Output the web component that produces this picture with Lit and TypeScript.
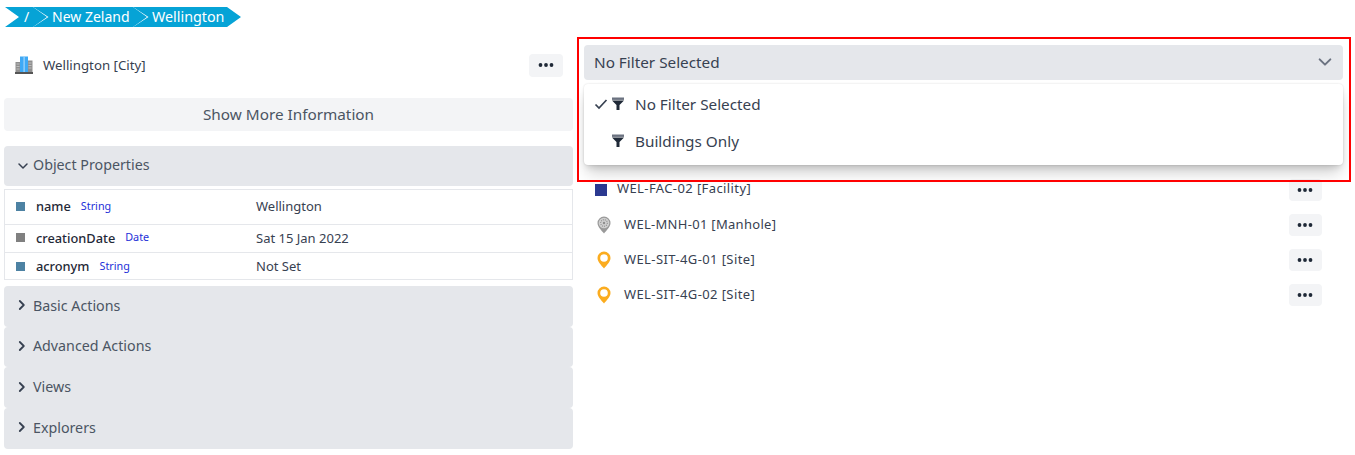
import { LitElement, html, css, svg } from "lit";
import { customElement } from "lit/decorators.js";

const chevDown = html`<svg class="chev" viewBox="0 0 12 12"><path d="M2 4l4 4 4-4" fill="none" stroke="currentColor" stroke-width="1.5" stroke-linecap="round" stroke-linejoin="round"/></svg>`;
const chevRight = html`<svg class="chev" viewBox="0 0 12 12"><path d="M2.800 2l4 4-4 4" fill="none" stroke="currentColor" stroke-width="1.800" stroke-linecap="round" stroke-linejoin="round"/></svg>`;
const funnel = html`<svg class="funnel" viewBox="0 0 12 13"><rect x="0" y="0.5" width="12" height="2.400" fill="#6b7280"/><path d="M0 3.600h12L7.500 8V13H4.500V8z" fill="#1f2937"/></svg>`;
const check = html`<svg class="check" viewBox="0 0 14 12"><path d="M1.500 6.500l3.500 3.500 7.500-8" fill="none" stroke="#374151" stroke-width="1.700"/></svg>`;
const dots = html`<button class="dots"><svg viewBox="0 0 16 4" width="16" height="4"><circle cx="2.500" cy="2" r="1.900" fill="#1f2937"/><circle cx="8" cy="2" r="1.900" fill="#1f2937"/><circle cx="13.500" cy="2" r="1.900" fill="#1f2937"/></svg></button>`;
const city = html`<svg class="city" viewBox="0 0 18 18">
  <rect x="0.500" y="6" width="6" height="11" fill="#8f8f8f"/><rect x="11.500" y="4.500" width="6" height="12.500" fill="#8f8f8f"/>
  <rect x="5" y="0.500" width="8" height="16.500" fill="#3fa9f5"/><rect x="8.500" y="0.500" width="1.200" height="16.500" fill="#a6d8fb"/>
  <path d="M1.500 8h3M1.500 10.500h3M1.500 13h3M13.500 7h3M13.500 9.500h3M13.500 12h3" stroke="#c9c9c9" stroke-width="0.800"/>
  <rect x="0" y="16" width="18" height="2" fill="#555"/></svg>`;
const pin = (c: string, hole: string) => svg`<svg class="pin" viewBox="0 0 14 18">
  <path d="M7 .5a6.500 6.500 0 0 1 6.500 6.500c0 3.800-4 7.500-6.500 10.500C4.500 14.500.5 10.800.5 7A6.500 6.500 0 0 1 7 .5z" fill="${c}"/>
  <circle cx="7" cy="7" r="3.800" fill="${hole}"/></svg>`;
const manhole = svg`<svg class="pin" viewBox="0 0 14 18">
  <path d="M7 .5a6.500 6.500 0 0 1 6.500 6.500c0 3.800-4 7.500-6.500 10.500C4.500 14.500.5 10.800.5 7A6.500 6.500 0 0 1 7 .5z" fill="#9a9a9a"/>
  <circle cx="7" cy="7" r="5.300" fill="#cfcfcf"/><circle cx="7" cy="7" r="3.300" fill="none" stroke="#8e8e8e" stroke-width="1.100" stroke-dasharray="1 1"/><circle cx="7" cy="7" r="1.200" fill="#8e8e8e"/></svg>`;

@customElement("app-root")
export class AppRoot extends LitElement {
  static styles = css`
    :host { display: block; position: relative; width: 1355px; height: 455px; overflow: hidden; background: #fff;
      font-family: "Noto Sans", sans-serif; color: #374151; }
    * { box-sizing: border-box; }
    .crumbs { display: flex; padding: 7px 0 0 5px; height: 27px; }
    .seg { height: 20px; background: #06a3d6; color: #fff; font-size: 14px; padding-bottom: 2px; display: flex; align-items: center;
      clip-path: polygon(0 0, calc(100% - 14px) 0, 100% 50%, calc(100% - 14px) 100%, 0 100%, 15.500px 50%); }
    .seg + .seg { margin-left: -14px; }
    .s1 { width: 42px; padding-left: 19px; clip-path: polygon(0 0, calc(100% - 14px) 0, 100% 50%, calc(100% - 14px) 100%, 0 100%, 14px 50%); }
    .s2 { width: 114px; padding-left: 19px; }
    .s3 { width: 108px; padding-left: 19px; font-size: 14.300px; }
    .cols { display: grid; grid-template-columns: 569px 759px; column-gap: 11px; padding-left: 4px; }
    .head { display: flex; align-items: center; height: 71px; padding: 6px 10px 0 11px; font-size: 13px; }
    .head .label { margin-left: 10px; flex: 1; padding-bottom: 2px; font-size: 13.250px; }
    .head .dots { margin-top: -1px; }
    .city { width: 18px; height: 18px; margin-top: -2px; }
    .dots { width: 34px; height: 23px; border: 0; border-radius: 4px; background: #f3f4f6; display: flex; align-items: center; justify-content: center; padding: 0; }
    .more { height: 33px; background: #f3f4f6; border-radius: 4px; display: flex; align-items: center; justify-content: center; font-size: 15.300px; color: #4b5563; padding-bottom: 2px; }
    .sec { height: 40.670px; background: #e5e7eb; border-radius: 4px; display: flex; align-items: center; padding: 0 0 2px 13px; font-size: 14.250px; color: #4b5563; gap: 4px; }
    .sec:nth-of-type(n) { flex: none; }
    .open { height: 40px; margin-top: 15px; padding-bottom: 4px; }
    .open .chev { margin-top: 3px; }
    .chev { width: 12px; height: 12px; color: #374151; }
    .props { margin: 3px 0 6px; border: 1px solid #e5e7eb; }
    .prow { display: grid; grid-template-columns: 251px 1fr; align-items: center; height: 28px; font-size: 13px; border-top: 1px solid #e5e7eb; padding-bottom: 2px; }
    .prow:first-child { height: 34px; border-top: 0; }
    .prow:last-child { height: 27px; padding-bottom: 0; }
    .pname { display: flex; align-items: center; padding-left: 11px; font-weight: 500; color: #1f2937; font-size: 12.800px; }
    .sq { width: 9px; height: 9px; margin-right: 11px; }
    .type { font-size: 10.800px; color: #1d2fd8; margin-left: 10px; font-weight: 400; position: relative; top: -1px; }
    .trigger { margin-top: 18px; height: 35px; background: #e5e7eb; border-radius: 4px; display: flex; align-items: center; justify-content: space-between; padding: 0 10px 2px; font-size: 15.300px; color: #374151; }
    .trigger .chev { width: 16px; height: 16px; color: #6b7280; }
    .rows { margin-top: 92px; padding: 0 21px 0 11px; display: flex; flex-direction: column; }
    .row { height: 35px; display: flex; align-items: center; font-size: 13px; }
    .row .name { flex: 1; margin-left: 11px; padding-bottom: 2px; letter-spacing: .4px; }
    .row.f .name { padding-bottom: 4px; }
    .row .sqb { width: 12px; height: 12px; background: #2b3990; margin-right: -1px; }
    .pin { width: 14px; height: 18px; margin-left: 2px; }
    .row.p .name { margin-left: 13px; }
    .row.m .name { letter-spacing: .3px; }
    .row .dots { width: 33px; height: 22px; padding-right: 1px; }
    .menu { position: absolute; left: 584px; top: 84px; width: 759px; height: 81px; background: #fff; border-radius: 4px;
      box-shadow: 0 10px 15px -3px rgba(0,0,0,.2), 0 4px 6px -2px rgba(0,0,0,.12), 0 0 2px rgba(0,0,0,.15); padding-top: 2px; }
    .opt { height: 37px; display: grid; grid-template-columns: 18px 23px 1fr; align-items: center; padding: 0 0 2px 10px; font-size: 15.300px; color: #374151; }
    .check { width: 14px; height: 12px; }
    .funnel { width: 12px; height: 13px; }
    .frame { position: absolute; left: 577px; top: 37px; width: 774px; height: 145px; border: 2px solid #f00; pointer-events: none; }
  `;

  render() {
    const prop = (color: string, name: string, type: string, val: string) => html`
      <div class="prow"><div class="pname"><span class="sq" style="background:${color}"></span>${name}<span class="type">${type}</span></div><div>${val}</div></div>`;
    return html`
      <nav class="crumbs">
        <div class="seg s1">/</div><div class="seg s2">New Zeland</div><div class="seg s3">Wellington</div>
      </nav>
      <div class="cols">
        <section>
          <div class="head">${city}<span class="label">Wellington [City]</span>${dots}</div>
          <div class="more">Show More Information</div>
          <div class="sec open">${chevDown}Object Properties</div>
          <div class="props">
            ${prop("#4d82a3", "name", "String", "Wellington")}
            ${prop("#808080", "creationDate", "Date", "Sat 15 Jan 2022")}
            ${prop("#4d82a3", "acronym", "String", "Not Set")}
          </div>
          <div class="sec">${chevRight}Basic Actions</div>
          <div class="sec">${chevRight}Advanced Actions</div>
          <div class="sec">${chevRight}Views</div>
          <div class="sec">${chevRight}Explorers</div>
        </section>
        <section>
          <div class="trigger">No Filter Selected ${chevDown}</div>
          <div class="rows">
            <div class="row f"><span class="sqb"></span><span class="name">WEL-FAC-02 [Facility]</span>${dots}</div>
            <div class="row p m">${manhole}<span class="name">WEL-MNH-01 [Manhole]</span>${dots}</div>
            <div class="row p">${pin("#fbac1f", "#fff")}<span class="name">WEL-SIT-4G-01 [Site]</span>${dots}</div>
            <div class="row p">${pin("#fbac1f", "#fff")}<span class="name">WEL-SIT-4G-02 [Site]</span>${dots}</div>
          </div>
        </section>
      </div>
      <div class="menu">
        <div class="opt">${check}${funnel}<span>No Filter Selected</span></div>
        <div class="opt"><span></span>${funnel}<span>Buildings Only</span></div>
      </div>
      <div class="frame"></div>
    `;
  }
}
